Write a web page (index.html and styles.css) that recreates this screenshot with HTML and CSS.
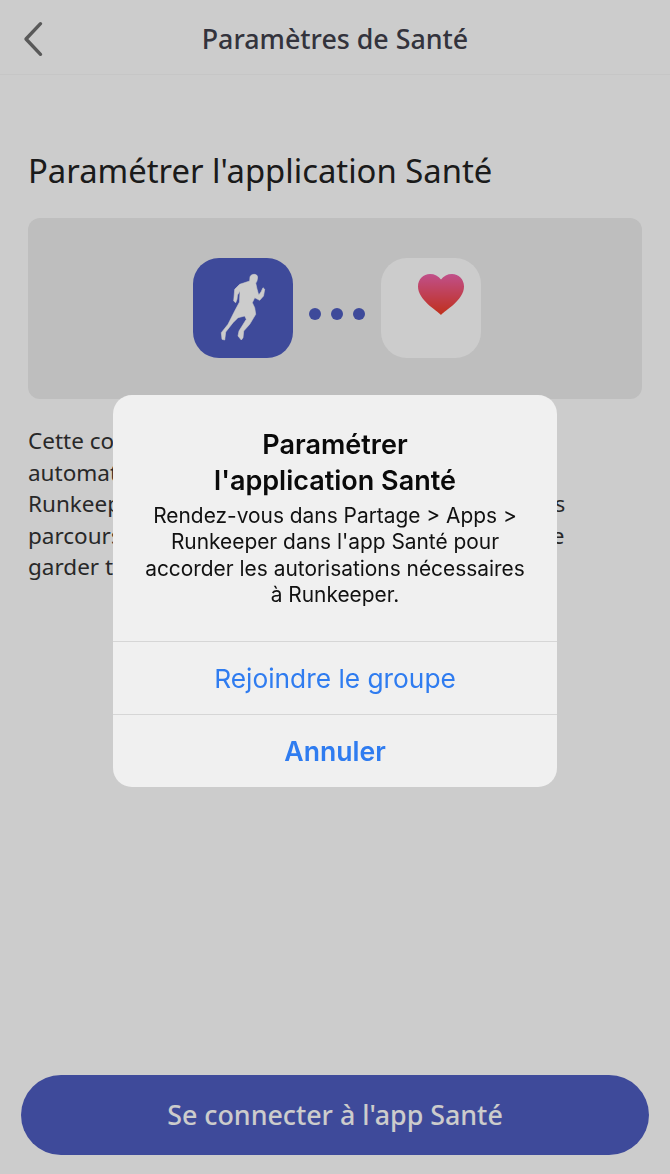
FILE: index.html
```html
<!DOCTYPE html>
<html lang="fr">
<head>
    <meta charset="UTF-8">
    <title>Paramètres de Santé</title>
    <link rel="stylesheet" href="styles.css">
</head>
<body>

<div class="page">
    <header class="top-bar">
        <svg class="back-icon" width="22" height="38" viewBox="0 0 22 38">
            <path d="M18.500 4.700 L4 20 L18.500 35.300" fill="none" stroke="#707070" stroke-width="3.400" stroke-linecap="round" stroke-linejoin="round"/>
        </svg>
        <span class="top-title">Paramètres de Santé</span>
    </header>

    <main class="content">
        <h1 class="heading">Paramétrer l'application Santé</h1>

        <div class="banner">
            <div class="app-icon app-icon-run">
                <svg width="100" height="100" viewBox="0 0 100 100">
                    <path fill="#fff" stroke="#fff" stroke-width="0.600" stroke-linejoin="round" d="M60 16.500 C63 15.800 65 17.500 64.500 20 C64.300 22.500 63.500 24.500 62.700 25 L64 31 L65.700 37 L68 34 L70 29.700 L71.700 31.300 L70.500 38 L66.700 42.300 L61.700 39.700 L59.300 44.700 L61.700 49.700 L62.700 56.300 L56.700 66.300 L50.700 73 L50 79.700 L48.300 82 L45 78 L46 73 L53.300 61.300 L51.700 58 L45 59.700 L40 64.700 L32.700 74 L31.700 82 L29 81.300 L28.300 74.700 L35 66.300 L41.700 53 L46.500 44 L47 33 L44.500 37 L44 41.300 L42.700 44.700 L40.700 43 L41.700 31.300 L46.700 26.300 L56.700 23 L57 19 C57.500 17.500 58.500 16.800 60 16.500 Z"/>
                </svg>
            </div>
            <div class="dots">
                <span class="dot"></span>
                <span class="dot"></span>
                <span class="dot"></span>
            </div>
            <div class="app-icon app-icon-health">
                <svg class="heart" width="46" height="41" viewBox="0 0 46 41">
                    <defs>
                        <linearGradient id="heartFill" x1="0" y1="0" x2="0" y2="1">
                            <stop offset="0" stop-color="#f064ad"/>
                            <stop offset="1" stop-color="#f03c23"/>
                        </linearGradient>
                    </defs>
                    <path fill="url(#heartFill)" d="M23 41 C19 36.500 0 26 0 12.500 C0 5 5.500 0 12 0 C16.500 0 20.500 2 23 5.500 C25.500 2 29.500 0 34 0 C40.500 0 46 5 46 12.500 C46 26 27 36.500 23 41 Z"/>
                </svg>
            </div>
        </div>

        <p class="intro">
            Cette connexion permet d'enregistrer<br>
            automatiquement vos activités dans l'app Santé.<br>
            Runkeeper peut y afficher la vitesse de vos courses<br>
            parcours plus vos calories, pour vous permettre de<br>
            garder toutes vos données au même endroit.
        </p>
    </main>

    <button class="connect-btn">Se connecter à l'app Santé</button>
</div>

<!-- iOS alert over the page -->
<div class="scrim">
    <div class="alert">
        <div class="alert-body">
            <div class="alert-title">Paramétrer<br>l'application Santé</div>
            <div class="alert-text">Rendez-vous dans Partage &gt; Apps &gt;<br>Runkeeper dans l'app Santé pour<br>accorder les autorisations nécessaires<br>à Runkeeper.</div>
        </div>
        <div class="alert-action">Rejoindre le groupe</div>
        <div class="alert-action alert-cancel">Annuler</div>
    </div>
</div>

</body>
</html>
```

FILE: styles.css
```css
body {
    margin: 0;
    padding: 0;
    background-color: #fff;
    font-family: 'Noto Sans', 'Open Sans', sans-serif;
    color: #222;
}
.page {
    height: 1174px;
    display: flex;
    flex-direction: column;
    overflow: hidden;
}
.top-bar {
    height: 75px;
    flex-shrink: 0;
    box-sizing: border-box;
    border-bottom: 1px solid #f8f8f8;
    padding-top: 2px;
    display: flex;
    align-items: center;
    justify-content: center;
    position: relative;
}
.back-icon {
    position: absolute;
    left: 22px;
    top: 19px;
}
.top-title {
    font-size: 26.800px;
    font-weight: 500;
    color: #40404c;
}
.content {
    padding: 0 28px;
    flex: 1;
}
.heading {
    margin: 74px 0 25px;
    font-size: 32.800px;
    font-weight: 400;
    line-height: 44px;
}
.banner {
    height: 181px;
    box-sizing: border-box;
    background-color: #eee;
    border-radius: 12px;
    display: flex;
    align-items: center;
    justify-content: center;
    gap: 16px;
    padding-left: 3px;
    padding-bottom: 2px;
}
.app-icon {
    width: 100px;
    height: 100px;
    border-radius: 26px;
}
.app-icon-run {
    background-color: #4e5dc1;
}
.app-icon-health {
    background-color: #fff;
    display: flex;
    justify-content: flex-end;
    align-items: flex-start;
}
.heart {
    margin: 16px 17px 0 0;
}
.dots {
    display: flex;
    gap: 10px;
    margin-top: 12px;
}
.dot {
    width: 12px;
    height: 12px;
    border-radius: 50%;
    background-color: #4e5dc1;
}
.intro {
    margin: 26px 0 0;
    font-size: 22.500px;
    line-height: 31.500px;
    white-space: nowrap;
    color: #333;
}
.connect-btn {
    margin: 0 21px 19px;
    height: 80px;
    flex-shrink: 0;
    border: none;
    border-radius: 40px;
    padding-bottom: 3px;
    background-color: #4e5dc1;
    color: #fff;
    font-family: inherit;
    font-size: 26.800px;
    font-weight: 500;
}
.scrim {
    position: fixed;
    inset: 0;
    background-color: rgba(0,0,0,0.2);
    display: flex;
    align-items: flex-start;
    justify-content: center;
}
.alert {
    width: 444px;
    margin-top: 395px;
    background-color: #f0f0f0;
    border-radius: 19px;
    font-family: 'Inter', 'Liberation Sans', sans-serif;
    text-align: center;
    overflow: hidden;
}
.alert-body {
    height: 246px;
    box-sizing: border-box;
    padding-top: 32px;
}
.alert-title {
    font-size: 27px;
    font-weight: 600;
    line-height: 36px;
    color: #0a0a0a;
}
.alert-text {
    margin-top: 4px;
    font-size: 20.900px;
    line-height: 26.300px;
    color: #111;
}
.alert-action {
    height: 73px;
    box-sizing: border-box;
    border-top: 1px solid #d6d6d6;
    display: flex;
    align-items: center;
    justify-content: center;
    font-size: 26.300px;
    color: #2f7cf0;
}
.alert-cancel {
    font-size: 26.600px;
    font-weight: 600;
}
```
